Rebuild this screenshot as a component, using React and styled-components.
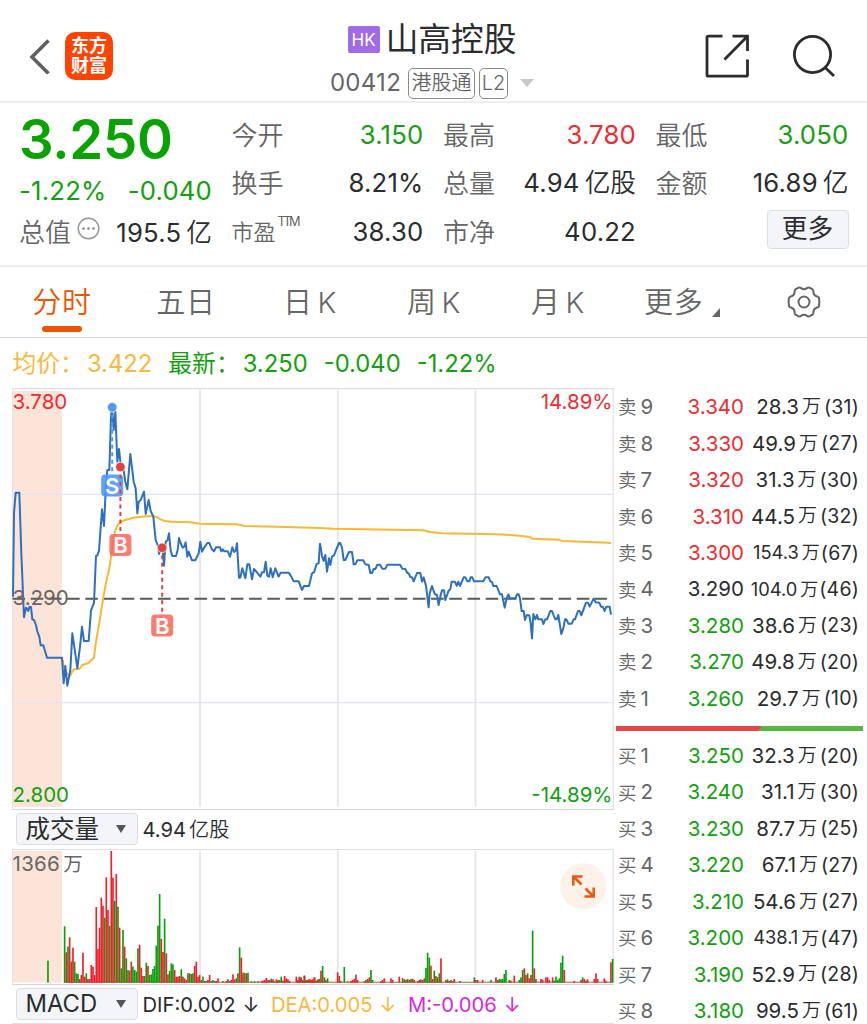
import React from "react";
import styled, { createGlobalStyle } from "styled-components";

const RED = "#ee2c30";
const GREEN = "#12a00f";
const DARK = "#2b2c2e";
const GREY = "#666";

const GlobalStyle = createGlobalStyle`
  * {
    box-sizing: border-box;
  }

  body {
    margin: 0;
    background: #fff;
    overflow: hidden;
    font-family: Inter, "Noto Sans CJK SC", sans-serif;
    line-height: 1.2;
    color: ${DARK};
  }
`;

const Page = styled.div`
  width: 867px;
  height: 1024px;
  display: flex;
  flex-direction: column;
  overflow: hidden;
  white-space: nowrap;
`;

/* ---------- header ---------- */

const Header = styled.header`
  height: 103px;
  flex: none;
  display: flex;
  align-items: center;
  justify-content: space-between;
  padding: 11px 31px 0 28px;
  border-bottom: 2px solid #eeeeee;
`;

const HeaderSide = styled.div`
  width: 134px;
  display: flex;
  align-items: center;
  justify-content: ${(p) => (p.$end ? "flex-end" : "flex-start")};
  gap: ${(p) => p.$gap}px;
`;

const AppLogo = styled.div`
  width: 48px;
  height: 48px;
  border-radius: 10px;
  background: #ff4400;
  color: #fff;
  font-size: 18px;
  line-height: 20px;
  font-weight: 700;
  text-align: center;
  padding-top: 4px;
`;

const Title = styled.div`
  display: flex;
  flex-direction: column;
  align-items: center;
  padding-top: 5px;
`;

const NameRow = styled.div`
  display: flex;
  align-items: center;
  gap: 6px;
  height: 44px;
  font-size: 32.7px;
  padding-top: 4px;
`;

const Market = styled.span`
  width: 32px;
  height: 27px;
  margin-top: -1px;
  border-radius: 2px;
  background: #9f6be8;
  color: #fff;
  font-size: 17px;
  line-height: 28px;
  text-align: center;
`;

const CodeRow = styled.div`
  display: flex;
  align-items: center;
  gap: 4px;
  height: 36px;
  margin-top: 5px;
  font-size: 24px;
  color: ${GREY};
`;

const Code = styled.span`
  margin-right: 3px;
  letter-spacing: 0.3px;
`;

const Badge = styled.span`
  height: 31px;
  width: ${(p) => p.$w}px;
  text-align: center;
  border: 1.5px solid #8a8a8a;
  border-radius: 5px;
  font-size: 20px;
  font-weight: 350;
  line-height: 29px;
`;

const Caret = styled.span`
  width: 0;
  margin-left: 8px;
  border: 7px solid transparent;
  border-top: 8px solid #c8c8c8;
  border-bottom: 0;
`;

/* ---------- quote ---------- */

const Quote = styled.section`
  height: 164px;
  flex: none;
  display: grid;
  grid-template-columns: 193px 192px 193px 193px;
  column-gap: 19.5px;
  padding: 8px 18px 0 19px;
  border-bottom: 2px solid #eeeeee;
`;

const QuoteColumn = styled.div`
  display: flex;
  flex-direction: column;
`;

const LastPrice = styled.div`
  height: 56px;
  font-size: 54.5px;
  line-height: 56px;
  font-weight: 600;
  letter-spacing: -0.3px;
  color: #08a300;
`;

const Cell = styled.div`
  height: ${(p) => p.$h || 48.5}px;
  display: flex;
  align-items: center;
  justify-content: space-between;
  font-size: 25.7px;
  letter-spacing: 0.2px;
  color: ${(p) => p.$color || DARK};
`;

const Label = styled.span`
  display: flex;
  align-items: center;
  color: ${GREY};
  font-size: ${(p) => (p.$small ? 22 : 26)}px;
  font-weight: 350;
  letter-spacing: 0;
`;

const Sup = styled.sup`
  font-size: 12.8px;
  line-height: 16px;
  letter-spacing: -2.5px;
  font-weight: 400;
  margin: -20px 0 0 2px;
`;

const Unit = styled.span`
  margin-left: ${(p) => p.$gap || 5}px;
  font-weight: 350;
  letter-spacing: 0;
`;

const MoreButton = styled.button`
  width: 82px;
  height: 39px;
  margin: -5px 0 0 auto;
  padding: 0;
  border: 1.5px solid #dcdee3;
  border-radius: 4px;
  background: #f4f5f8;
  font: inherit;
  color: ${DARK};
`;

/* ---------- tabs ---------- */

const Tabs = styled.nav`
  height: 71px;
  flex: none;
  display: flex;
  align-items: center;
  border-bottom: 1.5px solid #d6d6d6;
`;

const Tab = styled.div`
  width: 124px;
  height: 69px;
  display: flex;
  flex-direction: column;
  align-items: center;
  padding-top: 13px;
  font-size: 29px;
  line-height: 43px;
  font-weight: 350;
  color: ${(p) => (p.$active ? "#ea5504" : GREY)};

  &::after {
    content: "";
    width: 40px;
    height: 6px;
    margin-top: 2px;
    border-radius: 3px;
    background: ${(p) => (p.$active ? "#ea5504" : "transparent")};
  }
`;

const TabLabel = styled.span`
  display: flex;
  align-items: center;
  gap: 4.5px;
  letter-spacing: 0.8px;
`;

const Corner = styled.span`
  align-self: flex-end;
  margin: 0 0 7px 4px;
  border-left: 8px solid transparent;
  border-bottom: 9px solid ${GREY};
`;

const Legend = styled.div`
  height: 50px;
  flex: none;
  display: flex;
  align-items: center;
  gap: 16px;
  padding: 3px 0 0 12.5px;
  font-size: 23.8px;
`;

const LegendItem = styled.span`
  display: flex;
  gap: 3px;
  color: ${(p) => p.$color};
`;

/* ---------- body ---------- */

const Body = styled.main`
  flex: 1;
  min-height: 0;
  display: flex;
`;

const Charts = styled.div`
  width: 614px;
  padding-left: 12px;
  display: flex;
  flex-direction: column;

  svg {
    display: block;
    flex: none;
  }
`;

const IndicatorBar = styled.div`
  height: ${(p) => p.$h}px;
  flex: none;
  display: flex;
  align-items: center;
  padding: 0 0 1px 4px;
  font-size: 20.2px;
  border-top: 1.5px solid #d3d5d8;
  border-bottom: 1.5px solid #dfe1e4;
`;

const Picker = styled.div`
  width: 122px;
  height: 32px;
  margin-right: 4.5px;
  padding: 2px 11px 0 8.5px;
  display: flex;
  align-items: center;
  justify-content: space-between;
  border: 1.5px solid #dcdee3;
  border-radius: 4px;
  background: #f4f5f8;
  font-size: ${(p) => p.$size || 24.5}px;

  &::after {
    content: "";
    margin-top: -2px;
    border: 5px solid transparent;
    border-top: 8px solid #555;
    border-bottom: 0;
  }
`;

const Value = styled.span`
  display: flex;
  align-items: center;
  gap: 7px;
  padding-top: 3px;
  margin-right: ${(p) => p.$after || 0}px;
  color: ${(p) => p.$color || DARK};
`;

const Book = styled.aside`
  flex: 1;
  padding: 1.3px 8px 0 4px;
`;

const BookRow = styled.div`
  height: 36.45px;
  display: flex;
  align-items: center;
  font-size: 20.5px;
`;

const Level = styled.span`
  width: 44px;
  display: flex;
  gap: 4px;
  align-items: center;
  color: ${GREY};

  span {
    font-size: 18.5px;
    font-weight: 350;
  }
`;

const Price = styled.span`
  width: 82px;
  text-align: right;
  color: ${(p) => p.$color};
`;

const Size = styled.span`
  flex: 1;
  display: flex;
  align-items: center;
  justify-content: flex-end;
  font-size: ${(p) => (p.$long ? 18.3 : 20.5)}px;

  em {
    font-style: normal;
    font-size: 19.5px;
    margin-left: ${(p) => (p.$long ? 1 : 3)}px;
    letter-spacing: 0.2px;
  }
`;

const Wan = styled.span`
  margin-left: 3px;
  font-size: ${(p) => (p.$long ? 18 : 19)}px;
  font-weight: 350;
`;

const Ratio = styled.div`
  height: 5px;
  margin: 9px -4px 6.8px -2px;
  background: linear-gradient(130deg, #e84545 58.1%, #56b83e 58.4%);
`;

/* ---------- data ---------- */

const SELLS = [
  ["9", "3.340", "28.3", 31, RED],
  ["8", "3.330", "49.9", 27, RED],
  ["7", "3.320", "31.3", 30, RED],
  ["6", "3.310", "44.5", 32, RED],
  ["5", "3.300", "154.3", 67, RED],
  ["4", "3.290", "104.0", 46, DARK],
  ["3", "3.280", "38.6", 23, GREEN],
  ["2", "3.270", "49.8", 20, GREEN],
  ["1", "3.260", "29.7", 10, GREEN],
];

const BUYS = [
  ["1", "3.250", "32.3", 20, GREEN],
  ["2", "3.240", "31.1", 30, GREEN],
  ["3", "3.230", "87.7", 25, GREEN],
  ["4", "3.220", "67.1", 27, GREEN],
  ["5", "3.210", "54.6", 27, GREEN],
  ["6", "3.200", "438.1", 47, GREEN],
  ["7", "3.190", "52.9", 28, GREEN],
  ["8", "3.180", "99.5", 61, GREEN],
];

// both halves of the session are plotted in thirds of a pixel
const PRICE_AM =
  "39,650 42,400 47,338 58,338 64,520 72,712 78,683 85,693 88,681 93,681 97,718 102,720 108,735 112,755 118,770 122,796 130,796 141,833 186,833 191,910 196,858 202,917 211,870 217,760 225,815 232,865 240,800 246,740 252,783 266,783 273,692 282,668 288,528 292,526 297,512 306,388 312,438 318,310 322,270 328,270 333,110 336,82 341,150 346,95 352,245 357,207 363,262 370,265 376,305 382,328 391,222 401,305 407,325 412,400 416,365 422,360 432,335 437,402 446,360 452,393 460,410 467,480 475,500 477,522 482,505 488,510 492,557 497,485 503,480 507,460 512,512 517,528 528,528 533,510 537,474 543,492 548,503 553,500 557,487 562,530 566,515 576,541 586,541 596,520 601,485 606,515 613,502 622,489 628,489 635,507 642,514 648,502 660,502 664,514 668,508 673,514 683,514 690,530 697,502 702,516 707,512 711,490 717,593 721,593 727,565 736,595 742,553 748,553 756,598 762,567 770,576 781,590 786,577 792,577 797,545 802,587 807,590 812,565 818,592 826,565 836,590 842,578 866,578 874,590 881,604 896,604 906,630 912,618 927,618 936,580 942,577 950,552 956,550 960,490";

const PRICE_PM =
  "60,190 66,228 71,243 76,225 81,275 87,235 91,255 96,230 102,226 109,208 117,189 121,189 126,203 131,240 136,240 147,216 156,216 161,253 166,253 172,241 190,241 196,253 206,255 211,279 216,279 221,267 226,267 232,254 240,254 247,266 256,266 262,254 300,254 307,266 316,267 322,279 326,280 331,291 336,292 341,304 351,279 361,279 366,305 371,292 378,318 386,382 389,340 396,318 404,342 411,345 416,375 422,345 426,331 432,331 436,360 446,332 451,328 455,305 465,305 470,318 475,305 480,318 491,292 496,292 502,304 508,304 512,292 517,292 522,304 550,304 556,292 566,292 571,304 576,306 580,318 590,318 600,343 606,343 614,383 620,355 625,343 630,355 646,355 651,343 656,343 660,355 665,393 671,393 675,420 680,406 688,406 692,430 696,475 700,402 706,418 711,405 715,418 726,418 730,432 736,418 741,418 751,393 756,393 761,406 766,418 770,418 775,405 784,462 790,445 795,418 799,418 805,431 815,431 821,418 825,418 834,393 839,393 844,406 858,368 864,368 869,380 881,355 887,367 898,368 903,380 908,380 914,393 919,380 929,380 933,404";

const AVERAGE_AM =
  "188,840 192,860 200,880 211,887 217,874 222,868 238,867 247,855 266,849 282,832 288,785 300,715 312,640 322,590 327,570 333,530 345,455 350,440 360,427 372,421 387,417 400,413 420,411 440,409 464,409 472,412 482,418 494,423 515,425 570,427 600,431 710,433 735,438 830,440 960,444";

const AVERAGE_PM =
  "59,144 100,146 370,151 390,156 425,160 590,163 660,167 690,171 697,176 775,179 787,183 925,188 933,190";

const VOLUME_AM =
  "144 542 g,194 439 g,199 517 r,204 500 g,209 472 r,214 545 r,219 503 r,224 545 g,229 580 g,234 582 g,239 597 r,244 585 r,249 518 r,254 590 r,259 580 g,264 597 r,269 597 r,274 555 r,279 560 r,284 585 r,289 381 r,294 507 r,299 443 r,304 353 r,309 377 r,314 413 g,319 292 r,324 390 r,329 437 g,334 213 r,339 293 r,344 362 g,349 282 r,354 380 g,359 443 r,364 565 g,369 450 g,374 500 r,379 535 g,384 570 g,389 572 r,394 545 r,399 560 g,404 570 g,409 575 g,414 505 g,419 494 r,424 563 r,429 588 r,434 588 g,439 548 g,444 558 r,449 585 g,454 583 g,459 567 g,464 558 g,469 497 g,474 437 g,479 342 g,484 476 r,489 516 r,494 416 g,499 520 r,504 583 r,509 573 g,514 550 g,519 553 g,524 570 r,529 590 r,534 590 r,539 588 r,544 568 g,549 590 r,554 595 r,559 600 r,564 580 g,569 580 r,574 582 g,579 580 g,584 558 r,589 545 r,594 590 r,599 585 r,604 600 g,609 590 g,614 603 r,619 603 r,624 600 r,629 585 r,634 603 g,639 600 g,644 603 r,649 603 r,654 595 r,669 603 g,679 603 r,684 598 r,689 603 g,694 600 r,699 583 r,704 598 r,709 595 g,714 580 r,719 502 g,724 533 r,729 578 r,734 578 g,739 580 r,744 578 g,754 604 g,764 604 g,774 604 g,784 604 r,789 602 r,794 600 r,799 594 r,804 600 r,809 600 r,814 596 g,819 598 r,824 604 r,829 598 r,834 600 g,839 600 r,844 590 g,849 602 r,854 588 r,859 595 r,864 598 r,869 603 r,889 590 r,894 600 r,899 590 r,904 592 g,909 603 r,914 587 r,919 600 g,924 600 g,929 598 r,934 603 r,939 600 r,944 592 r,949 602 r,954 598 r";

const VOLUME_PM =
  "-2 592 r,3 597 r,8 600 g,13 587 r,18 602 r,23 600 g,28 597 r,33 600 r,38 598 r,43 592 r,48 603 g,53 602 r,58 597 g,63 572 r,68 558 g,73 592 r,78 600 g,83 595 g,113 577 r,118 588 r,123 603 g,133 561 g,143 604 r,153 603 r,158 600 r,163 597 r,168 584 r,173 600 r,193 604 r,198 600 g,203 597 r,208 592 r,213 570 g,218 600 g,243 603 r,248 600 r,253 595 r,273 595 r,278 600 r,298 590 r,308 594 g,313 598 r,318 600 g,323 597 r,328 600 g,333 597 r,338 596 g,343 600 r,353 603 r,358 600 r,363 598 r,368 600 g,373 595 r,378 564 g,383 518 g,388 533 g,393 557 r,398 597 r,403 572 g,408 588 r,413 592 g,418 580 g,423 535 r,438 600 r,443 598 g,448 603 r,453 600 g,458 603 r,463 597 r,480 603 g,523 592 g,528 600 r,533 600 r,548 600 r,573 600 g,588 592 r,593 600 r,598 597 g,603 598 g,608 597 g,613 582 g,618 570 g,628 600 g,633 602 r,643 587 r,658 600 g,663 592 g,668 570 g,673 565 r,678 585 r,683 580 g,688 595 r,693 585 r,698 452 g,703 565 r,708 597 g,723 597 r,728 600 r,738 592 r,743 592 r,748 600 r,758 592 r,763 602 g,768 590 g,773 600 g,778 595 g,783 548 g,788 527 g,793 570 r,823 603 r,843 600 r,848 592 g,853 597 r,858 602 r,863 598 r,883 597 r,888 580 r,893 597 r,913 595 r,918 602 r,933 547 r,938 537 g";

function Bars({ data, x, y }) {
  return (
    <g transform={`translate(${x} ${y}) scale(0.33333)`}>
      {data.split(",").map((bar) => {
        const [left, top, side] = bar.split(" ");
        return (
          <rect
            key={left}
            x={left - 2.6}
            y={top}
            width="5"
            height={608 - top}
            fill={side === "g" ? "#08a00a" : "#f0202a"}
          />
        );
      })}
    </g>
  );
}

function Line({ points, x, y, color, width }) {
  return (
    <polyline
      transform={`translate(${x} ${y}) scale(0.33333)`}
      points={points}
      fill="none"
      stroke={color}
      strokeWidth={width}
      strokeLinejoin="round"
    />
  );
}

function Marker({ x, from, y, letter, dot, box }) {
  return (
    <g>
      <line x1={x} x2={x} y1={from} y2={y} stroke={dot} strokeWidth="2" strokeDasharray="4 3.5" />
      <circle cx={x} cy={from} r="4.8" fill={dot} stroke="#fff" strokeOpacity="0.7" strokeWidth="1" />
      <rect x={x - 11} y={y} width="22" height="22" rx="4" fill={box} fillOpacity="0.88" />
      <text x={x} y={y + 19} textAnchor="middle" fill="#fff" fontSize="22" fontWeight="600">
        {letter}
      </text>
    </g>
  );
}

function PriceChart() {
  return (
    <svg width="602" height="421" viewBox="12 388 602 421">
      <rect x="13" y="391" width="49" height="416" fill="#fce4d9" />
      <g stroke="#e3e5ec" strokeWidth="1.8">
        <path d="M200 390V806.5M337.8 390V806.5M475.5 390V806.5" />
        <path strokeWidth="1.3" d="M12 494.3H613M12 702.7H613M12.5 388V809M613.3 388V809" />
        <path strokeWidth="1.5" stroke="#dddfe3" d="M12 388.5H614" />
      </g>
      <path d="M12.5 598.8H607" stroke="#5a5a5a" strokeWidth="2" strokeDasharray="12.6 5.6" />
      <Line points={AVERAGE_AM} x={0} y={380} color="#fab832" width={6} />
      <Line points={AVERAGE_PM} x={300} y={480} color="#fab832" width={6} />
      <Line points={PRICE_AM} x={0} y={380} color="#2f70bd" width={6} />
      <Line points={PRICE_PM} x={300} y={480} color="#2f70bd" width={6} />
      <Marker x={112.2} from={407.3} y={474.5} letter="S" dot="#5097f5" box="#4b96fb" />
      <Marker x={120.4} from={467} y={534} letter="B" dot="#e0433f" box="#fb6a5c" />
      <Marker x={162.2} from={547.8} y={614.5} letter="B" dot="#e0433f" box="#fb6a5c" />
      <g fontSize="20.5">
        <text x="12.5" y="408.5" fill={RED}>3.780</text>
        <text x="12.5" y="605" fill={GREY}>3.290</text>
        <text x="12.5" y="801.5" fill={GREEN}>2.800</text>
        <text x="612.5" y="408.5" textAnchor="end" fill={RED}>14.89%</text>
        <text x="612.5" y="801.5" textAnchor="end" fill={GREEN}>-14.89%</text>
      </g>
    </svg>
  );
}

function VolumeChart() {
  return (
    <svg width="602" height="134" viewBox="12 850 602 134">
      <rect x="13" y="851" width="49" height="131.5" fill="#fce4d9" />
      <path
        d="M200 851V982M337.8 851V982M475.5 851V982"
        stroke="#e3e5ec"
        strokeWidth="1.8"
      />
      <path d="M12.5 850V984M613.3 850V984" stroke="#e3e5ec" strokeWidth="1.3" />
      <path d="M64 982.2H612" stroke="#b8543c" strokeWidth="1" />
      <Bars data={VOLUME_AM} x={0} y={780} />
      <Bars data={VOLUME_PM} x={300} y={780} />
      <text x="12.5" y="871" fontSize="20.5" letterSpacing="0.3" fill={GREY}>
        1366<tspan dx="3" fontSize="19.5">万</tspan>
      </text>
      <circle cx="583.3" cy="886.2" r="23" fill="#fdf1ea" />
      <path
        d="M581.5 884.5L573.5 876.5M573.3 885.5V876.5H582.5M585.5 888.5L593.5 896.5M593.7 887.5V896.5H584.5"
        fill="none"
        stroke="#ea5a10"
        strokeWidth="2.6"
      />
    </svg>
  );
}

function BackIcon() {
  return (
    <svg width="24" height="36" viewBox="0 0 24 36" fill="none" stroke="#606060" strokeWidth="3.6">
      <path d="M20.5 2.5L4 19L20.5 35.5" />
    </svg>
  );
}

function ShareIcon() {
  return (
    <svg width="46" height="46" viewBox="0 0 46 46" fill="none" stroke={DARK} strokeWidth="2.8">
      <path d="M18.5 3.2H4.5Q3 3.2 3 4.7V41.7Q3 43.2 4.5 43.2H42Q43.5 43.2 43.5 41.7V26.5" />
      <path d="M28.5 3.2H43.5V18M42.5 4.2L20.5 26.5" />
    </svg>
  );
}

function SearchIcon() {
  return (
    <svg width="44" height="44" viewBox="0 0 44 44" fill="none" stroke={DARK} strokeWidth="2.8">
      <circle cx="20.5" cy="20.5" r="18.1" />
      <path d="M32.8 33.3L42 42" />
    </svg>
  );
}

const DotsIcon = styled.svg`
  margin: -9px 0 0 6px;
`;

function MoreDots() {
  return (
    <DotsIcon width="23" height="23" viewBox="0 0 23 23">
      <circle cx="11.5" cy="11.5" r="10.3" fill="none" stroke="#999" strokeWidth="1.5" />
      <g fill="#888">
        <circle cx="6.5" cy="11.5" r="1.3" />
        <circle cx="11.5" cy="11.5" r="1.3" />
        <circle cx="16.5" cy="11.5" r="1.3" />
      </g>
    </DotsIcon>
  );
}

const Gear = styled.svg`
  margin: -1px 0 0 43px;
`;

function BookLine({ side, row }) {
  const [level, price, size, orders, color] = row;
  const long = size.length > 4;
  return (
    <BookRow>
      <Level>
        <span>{side}</span>
        {level}
      </Level>
      <Price $color={color}>{price}</Price>
      <Size $long={long}>
        {size}
        <Wan $long={long}>万</Wan>
        <em>({orders})</em>
      </Size>
    </BookRow>
  );
}

export default function App() {
  return (
    <Page>
      <GlobalStyle />
      <Header>
        <HeaderSide $gap={13}>
          <BackIcon />
          <AppLogo>
            东方
            <br />
            财富
          </AppLogo>
        </HeaderSide>
        <Title>
          <NameRow>
            <Market>HK</Market>
            山高控股
          </NameRow>
          <CodeRow>
            <Code>00412</Code>
            <Badge $w={67}>港股通</Badge>
            <Badge $w={29}>L2</Badge>
            <Caret />
          </CodeRow>
        </Title>
        <HeaderSide $end $gap={42}>
          <ShareIcon />
          <SearchIcon />
        </HeaderSide>
      </Header>

      <Quote>
        <QuoteColumn>
          <LastPrice>3.250</LastPrice>
          <Cell $h={48} $color={GREEN}>
            <span>-1.22%</span>
            <span>-0.040</span>
          </Cell>
          <Cell $h={36}>
            <Label>
              总值
              <MoreDots />
            </Label>
            <span>
              195.5<Unit>亿</Unit>
            </span>
          </Cell>
        </QuoteColumn>
        <QuoteColumn>
          <Cell $color={GREEN}>
            <Label>今开</Label>3.150
          </Cell>
          <Cell>
            <Label>换手</Label>8.21%
          </Cell>
          <Cell>
            <Label $small>
              市盈<Sup>TTM</Sup>
            </Label>
            38.30
          </Cell>
        </QuoteColumn>
        <QuoteColumn>
          <Cell $color={RED}>
            <Label>最高</Label>3.780
          </Cell>
          <Cell>
            <Label>总量</Label>
            <span>
              4.94<Unit>亿股</Unit>
            </span>
          </Cell>
          <Cell>
            <Label>市净</Label>40.22
          </Cell>
        </QuoteColumn>
        <QuoteColumn>
          <Cell $color={GREEN}>
            <Label>最低</Label>3.050
          </Cell>
          <Cell>
            <Label>金额</Label>
            <span>
              16.89<Unit>亿</Unit>
            </span>
          </Cell>
          <Cell>
            <MoreButton>更多</MoreButton>
          </Cell>
        </QuoteColumn>
      </Quote>

      <Tabs>
        <Tab $active>
          <TabLabel>分时</TabLabel>
        </Tab>
        <Tab>
          <TabLabel>五日</TabLabel>
        </Tab>
        <Tab>
          <TabLabel>
            日<span>K</span>
          </TabLabel>
        </Tab>
        <Tab>
          <TabLabel>
            周<span>K</span>
          </TabLabel>
        </Tab>
        <Tab>
          <TabLabel>
            月<span>K</span>
          </TabLabel>
        </Tab>
        <Tab>
          <TabLabel>
            更多
            <Corner />
          </TabLabel>
        </Tab>
        <Gear width="34" height="32" viewBox="0 0 34 32" fill="none" stroke={GREY} strokeWidth="2">
          <path d="M11.5 1.6Q13 1.2 14 2.2Q17 4.2 20 2.2Q21 1.2 22.5 1.6L25.5 3.4Q26.6 4.2 26.4 5.7Q26.4 9.3 29.6 10.2Q31.3 10.5 32 12Q32.8 16 32 20Q31.3 21.5 29.6 21.8Q26.4 22.7 26.4 26.3Q26.6 27.8 25.5 28.6L22.5 30.4Q21 30.8 20 29.8Q17 27.8 14 29.8Q13 30.8 11.5 30.4L8.5 28.6Q7.4 27.8 7.6 26.3Q7.6 22.7 4.4 21.8Q2.7 21.5 2 20Q1.2 16 2 12Q2.7 10.5 4.4 10.2Q7.6 9.3 7.6 5.7Q7.4 4.2 8.5 3.4Z" />
          <circle cx="17" cy="16" r="5.5" />
        </Gear>
      </Tabs>

      <Legend>
        <LegendItem $color="#fab83c">
          均价：<span>3.422</span>
        </LegendItem>
        <LegendItem $color={GREEN}>
          最新：<span>3.250</span>
        </LegendItem>
        <LegendItem $color={GREEN}>-0.040</LegendItem>
        <LegendItem $color={GREEN}>-1.22%</LegendItem>
      </Legend>

      <Body>
        <Charts>
          <PriceChart />
          <IndicatorBar $h={41}>
            <Picker>成交量</Picker>
            <Value>
              <span>
                4.94<Unit $gap={3}>亿股</Unit>
              </span>
            </Value>
          </IndicatorBar>
          <VolumeChart />
          <IndicatorBar $h={40}>
            <Picker $size={23.8}>MACD</Picker>
            <Value $after={11.5}>DIF:0.002 <span>↓</span></Value>
            <Value $after={11.5} $color="#fab83c">DEA:0.005 <span>↓</span></Value>
            <Value $color="#d42ad8">M:-0.006 <span>↓</span></Value>
          </IndicatorBar>
        </Charts>
        <Book>
          {SELLS.map((row) => (
            <BookLine key={row[0]} side="卖" row={row} />
          ))}
          <Ratio />
          {BUYS.map((row) => (
            <BookLine key={row[0]} side="买" row={row} />
          ))}
        </Book>
      </Body>
    </Page>
  );
}
